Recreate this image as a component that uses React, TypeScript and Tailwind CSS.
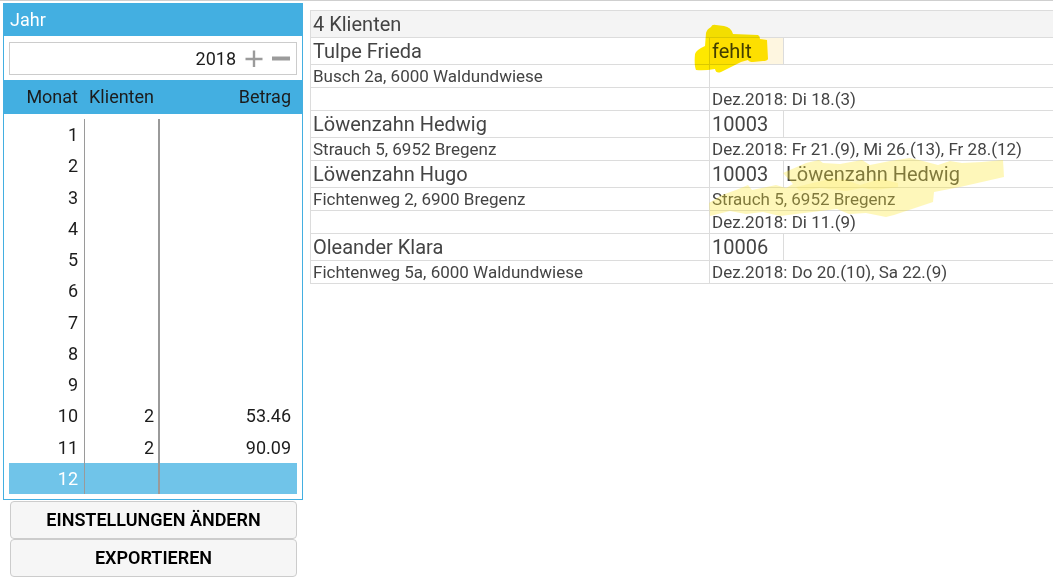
import { useState, type ReactNode } from 'react';

type Month = { month: number; clients?: string; amount?: string };

const months: Month[] = [
  { month: 1 },
  { month: 2 },
  { month: 3 },
  { month: 4 },
  { month: 5 },
  { month: 6 },
  { month: 7 },
  { month: 8 },
  { month: 9 },
  { month: 10, clients: '2', amount: '53.46' },
  { month: 11, clients: '2', amount: '90.09' },
  { month: 12 },
];

const cell = 'border-b border-l border-[#dcdcdc] p-0 pl-[2px] text-left font-normal whitespace-nowrap';

function NameRow({ name, id, extra, mark }: { name: string; id: ReactNode; extra?: ReactNode; mark?: boolean }) {
  return (
    <tr className="h-[27px] text-[20px] leading-[26px]">
      <td className={cell}>{name}</td>
      <td className={`${cell} relative ${mark ? 'bg-[#fef6e0]' : ''}`}>{id}</td>
      <td className={`${cell} relative`}>{extra}</td>
    </tr>
  );
}

function DetailRow({ left, right }: { left?: string; right?: string }) {
  return (
    <tr className="h-[23px] text-[17px] leading-[22px]">
      <td className={cell}>{left}</td>
      <td className={cell} colSpan={2}>{right}</td>
    </tr>
  );
}

function MissingMark() {
  return (
    <svg
      className="pointer-events-none absolute -top-[14px] -left-[16px] h-[50px] w-[76px] mix-blend-multiply"
      viewBox="694 24 76 50"
      aria-hidden="true"
    >
      <path
        d="M695 54 Q696 50 705 46 L706 33 Q707 29 711 27 Q712 24 716 25 L724 26 Q731 27 733 34 L758 35 Q760 36 760 39 L767 40 L768 59 Q767 61 763 61 L753 62 Q749 62 748 60 L741 62 L721 72 Q716 74 715 69 Q704 71 696 70 Q694 66 695 54Z"
        fill="#fee800"
      />
    </svg>
  );
}

function RelationMark() {
  return (
    <svg
      className="pointer-events-none absolute -top-[4px] -left-[79px] h-[60px] w-[302px]"
      viewBox="705 157 302 60"
      aria-hidden="true"
    >
      <g fill="#fde62f">
        <path
          opacity="0.33"
          d="M783 173 L806 163 L819 160 L823 163 L840 164 L862 160 L870 165 L890 161 L910 158 L923 161 L938 165 L950 161 L962 163 L982 162 L1003 160 L1004 177 L960 187 L934 192 L933 202 L894 215 L886 217 L866 213 L849 214 L837 209 L780 216 L763 212 L746 214 L730 211 L710 216 L709 203 L722 195 L736 190 L748 185 L752 190 L776 185 L786 188 L793 184Z"
        />
        <path
          opacity="0.16"
          d="M796 187 L830 179 L846 180 L860 185 L880 179 L898 183 L898 187 L876 190 L862 188 L846 191 L820 188 L800 191Z"
        />
      </g>
    </svg>
  );
}

export default function App() {
  const [year, setYear] = useState(2018);
  const [selected, setSelected] = useState(12);

  return (
    <div className="min-h-screen overflow-hidden border-t border-[#cfcfcf] bg-white font-['Roboto',sans-serif]">
      <div className="flex items-start gap-[7px] pl-[3px]">
        <aside className="w-[300px] shrink-0 pt-[2px] text-[18px] text-[#1c1c1c]">
          <div className="border border-[#43afe1] pb-[5px]">
            <label htmlFor="year" className="block h-[32px] bg-[#43afe1] pl-[6px] leading-[31px] text-white">
              Jahr
            </label>
            <div className="mx-[5px] mt-[6px] mb-[5px] flex h-[33px] items-center border border-[#cccccc]">
              <input
                id="year"
                className="min-w-0 flex-1 bg-transparent text-right leading-[31px] outline-none"
                value={year}
                onChange={(e) => setYear(Number(e.target.value) || 0)}
              />
              <button type="button" aria-label="Jahr erhöhen" className="ml-[9px] h-[18px] w-[18px]" onClick={() => setYear(year + 1)}>
                <svg viewBox="0 0 18 18" className="h-[18px] w-[18px]">
                  <path d="M9 0.5V17M0.5 9H17.5" stroke="#9b9b9b" strokeWidth="2.4" />
                </svg>
              </button>
              <button type="button" aria-label="Jahr verringern" className="mr-[6px] ml-[9px] h-[18px] w-[18px]" onClick={() => setYear(year - 1)}>
                <svg viewBox="0 0 18 18" className="h-[18px] w-[18px]">
                  <path d="M0 8.5H18" stroke="#9b9b9b" strokeWidth="4" />
                </svg>
              </button>
            </div>
            <div className="bg-[#43afe1] px-[5px]">
              <div className="flex h-[34px] items-center leading-[34px]" id="months-heading">
                <span className="w-[75px] pr-[6px] text-right">Monat</span>
                <span className="w-[75px] pr-[5px] text-right">Klienten</span>
                <span className="flex-1 pr-[6px] text-right">Betrag</span>
              </div>
            </div>
            <div className="px-[5px] pt-[5px]">
              <table aria-labelledby="months-heading" className="h-[375px] w-full table-fixed border-separate border-spacing-0">
                <colgroup>
                  <col className="w-[76px]" />
                  <col className="w-[75px]" />
                  <col />
                </colgroup>
                <tbody>
                  {months.map((m) => (
                    <tr
                      key={m.month}
                      onClick={() => setSelected(m.month)}
                      className={m.month === selected ? 'bg-[#70c4e9] text-white' : ''}
                    >
                      <td className="border-r border-[#9a9a9a] p-0 pr-[6px] text-right">{m.month}</td>
                      <td className="border-r-2 border-[#9a9a9a] p-0 pr-[4px] text-right">{m.clients}</td>
                      <td className="p-0 pr-[6px] text-right">{m.amount}</td>
                    </tr>
                  ))}
                </tbody>
              </table>
            </div>
          </div>
          <div className="mr-[6px] ml-[7px] mt-px flex flex-col font-semibold text-black">
            <button type="button" className="h-[38px] rounded-[4px] border border-[#cccccc] bg-[#f6f6f6] leading-[36px]">
              EINSTELLUNGEN ÄNDERN
            </button>
            <button type="button" className="h-[38px] rounded-[4px] border border-[#cccccc] bg-[#f6f6f6] leading-[36px]">
              EXPORTIEREN
            </button>
          </div>
        </aside>

        <main className="min-w-0 flex-1 pt-[9px]">
          <table className="w-full table-fixed border-separate border-spacing-0 border-t border-[#dcdcdc] text-[#444444]">
            <colgroup>
              <col className="w-[399px]" />
              <col className="w-[74px]" />
              <col />
            </colgroup>
            <thead>
              <tr className="h-[27px] bg-[#f4f4f4] text-[20px] leading-[26px]">
                <th className={cell} colSpan={3}>4 Klienten</th>
              </tr>
            </thead>
            <tbody>
              <NameRow name="Tulpe Frieda" id={<>fehlt<MissingMark /></>} mark />
              <DetailRow left="Busch 2a, 6000 Waldundwiese" />
              <DetailRow right="Dez.2018: Di 18.(3)" />
              <NameRow name="Löwenzahn Hedwig" id="10003" />
              <DetailRow left="Strauch 5, 6952 Bregenz" right="Dez.2018: Fr 21.(9), Mi 26.(13), Fr 28.(12)" />
              <NameRow name="Löwenzahn Hugo" id="10003" extra={<>Löwenzahn Hedwig<RelationMark /></>} />
              <DetailRow left="Fichtenweg 2, 6900 Bregenz" right="Strauch 5, 6952 Bregenz" />
              <DetailRow right="Dez.2018: Di 11.(9)" />
              <NameRow name="Oleander Klara" id="10006" />
              <DetailRow left="Fichtenweg 5a, 6000 Waldundwiese" right="Dez.2018: Do 20.(10), Sa 22.(9)" />
            </tbody>
          </table>
        </main>
      </div>
    </div>
  );
}
